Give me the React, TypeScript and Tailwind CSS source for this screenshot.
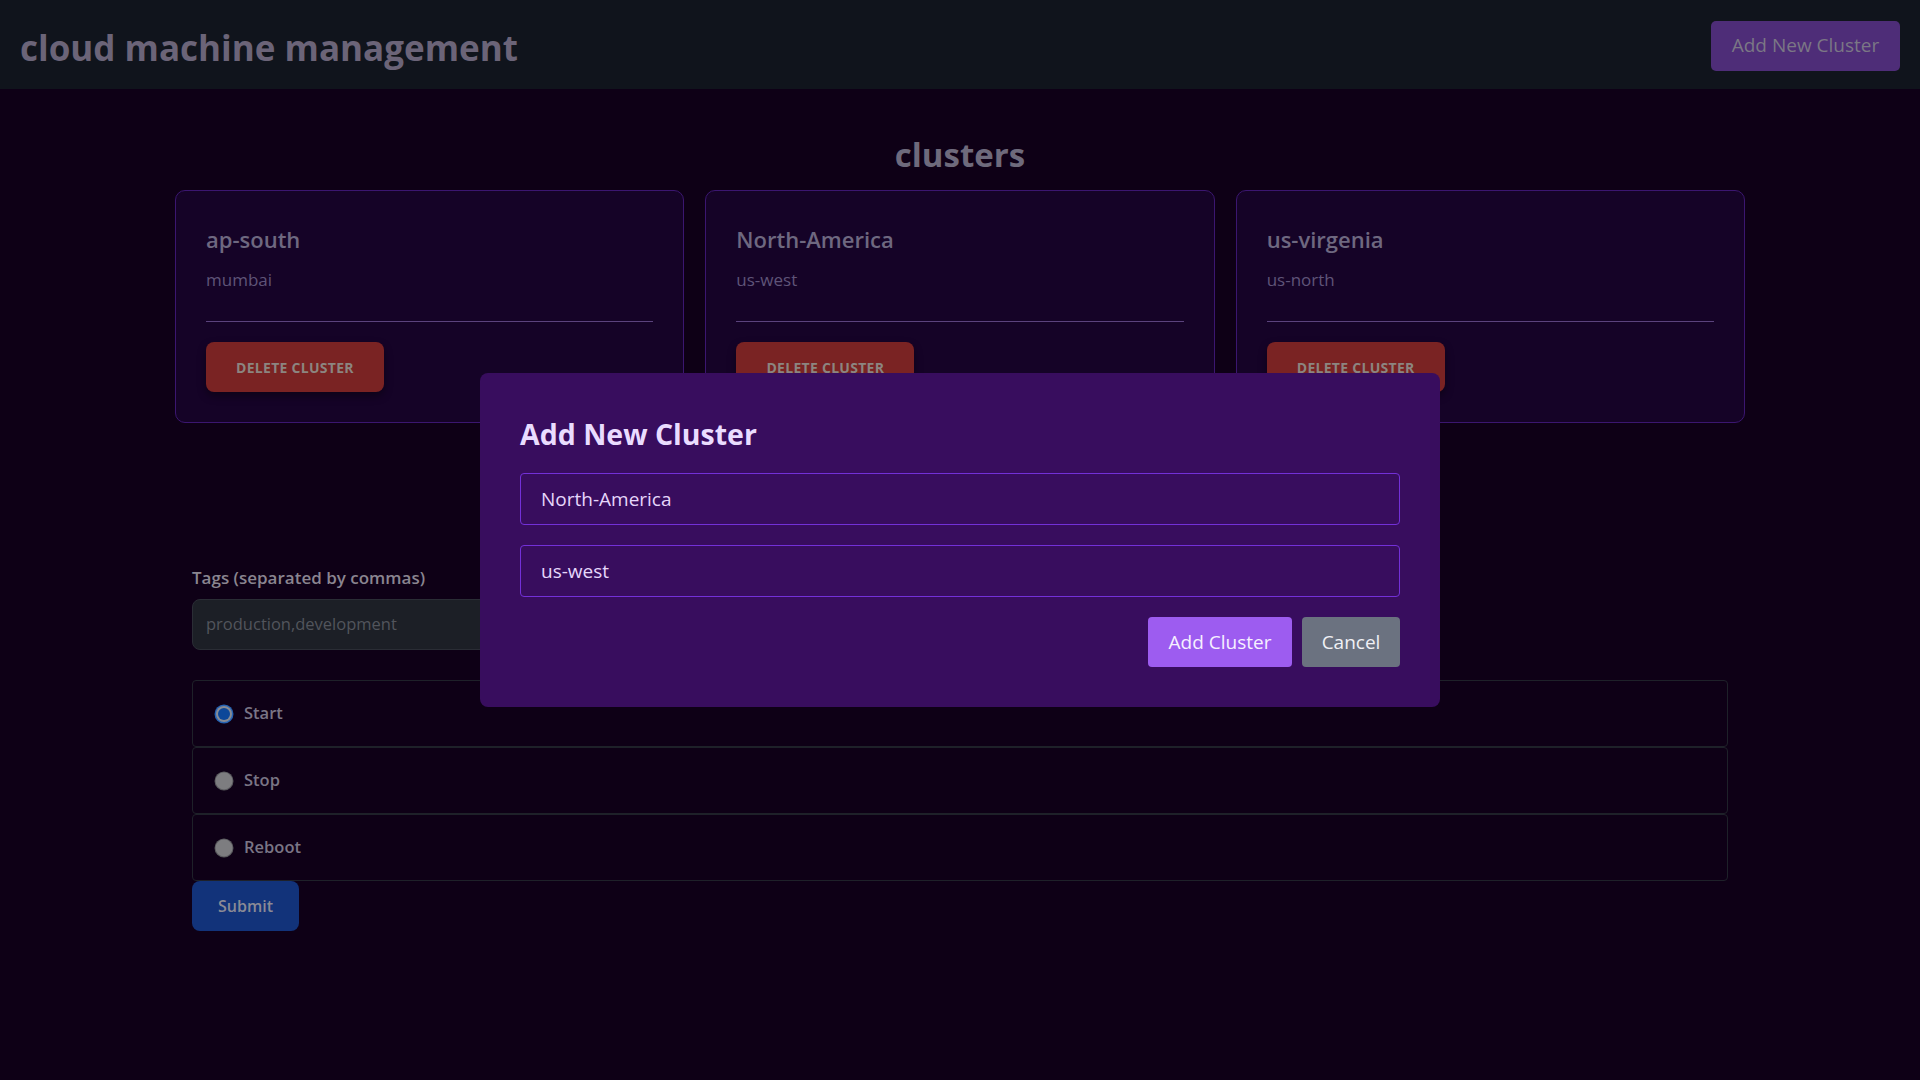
import React from "react";

const font = { fontFamily: '"Open Sans", "Noto Sans", sans-serif' };

function Radio({ checked }: { checked: boolean }) {
  if (checked) {
    return (
      <svg width="20" height="20" viewBox="0 0 20 20" className="shrink-0">
        <circle cx="10" cy="10" r="9.5" fill="#2563b4" />
        <circle cx="10" cy="10" r="8" fill="#878b94" />
        <circle cx="10" cy="10" r="6" fill="#0c4799" />
      </svg>
    );
  }
  return (
    <svg width="20" height="20" viewBox="0 0 20 20" className="shrink-0">
      <circle cx="10" cy="10" r="9.5" fill="#5a5a5e" />
      <circle cx="10" cy="10" r="8.5" fill="#7d7d80" />
    </svg>
  );
}

const clusters = [
  { name: "ap-south", region: "mumbai" },
  { name: "North-America", region: "us-west" },
  { name: "us-virgenia", region: "us-north" },
];

export default function App() {
  return (
    <div className="min-h-screen bg-[#0e0016]" style={font}>
      <header className="h-[89px] bg-[#10141c] flex items-center justify-between px-5">
        <h1 className="mt-[5px] text-[35px] font-bold text-[#6b6478] leading-none">cloud machine management</h1>
        <button className="mt-[2px] h-[50px] w-[189px] rounded-[5px] bg-[#4e2d78] text-[19px] text-[#7b7785]">
          Add New Cluster
        </button>
      </header>

      <main>
        <h2 className="mt-[42px] text-center text-[33px] font-bold leading-[48px] text-[#6e6a7c]">clusters</h2>
        <div className="mx-auto mt-[11px] grid w-[1570px] grid-cols-3 gap-[21px]">
          {clusters.map((c) => (
            <div key={c.name} className="rounded-[10px] border border-[#3b1670] bg-[#150327] p-[30px]">
              <div className="mt-[4px] text-[22px] font-semibold leading-[29px] text-[#6e6880]">{c.name}</div>
              <div className="mt-[14px] text-[17px] leading-[24px] text-[#5f5478]">{c.region}</div>
              <div className="mt-[29px] h-px bg-[#5b437d]" />
              <button className="mt-[20px] h-[50px] w-[178px] rounded-[8px] bg-[#7a2323] text-[14px] font-bold tracking-[0.02em] text-[#8c8580] shadow-[0_4px_8px_rgba(0,0,0,0.4)]">
                DELETE CLUSTER
              </button>
            </div>
          ))}
        </div>

        <div className="mx-auto mt-[143px] w-[1536px]">
          <label className="block text-[17px] font-semibold leading-[24px] text-[#8a8590]">
            Tags (separated by commas)
          </label>
          <div className="mt-[9px] flex h-[51px] w-[900px] items-center rounded-[8px] border border-[#2a2d35] bg-[#1c1f26] px-[13px] text-[16.5px] text-[#52555c]">
            production,development
          </div>

          <div className="mt-[30px] flex flex-col">
            {[
              { label: "Start", checked: true },
              { label: "Stop", checked: false },
              { label: "Reboot", checked: false },
            ].map((r) => (
              <div
                key={r.label}
                className="flex h-[67px] items-center gap-[10px] rounded-[4px] border border-[#1e2129] pl-[21px]"
              >
                <Radio checked={r.checked} />
                <span className="text-[16.5px] font-semibold text-[#7a7585]">{r.label}</span>
              </div>
            ))}
          </div>
          <button className="h-[50px] w-[107px] rounded-[8px] bg-[#12337a] text-[16px] font-semibold text-[#8a8a95]">
            Submit
          </button>
        </div>
      </main>

      <div className="fixed inset-0 flex items-center justify-center">
        <div className="w-[960px] rounded-[8px] bg-[#380d5e] p-10">
          <h2 className="text-[28.5px] font-bold leading-[42px] text-[#eadcff]">Add New Cluster</h2>
          <div className="mt-[18px] flex h-[52px] items-center rounded-[4px] border border-[#7330d8] px-5 text-[19px] text-[#e6d6fb]">
            North-America
          </div>
          <div className="mt-5 flex h-[52px] items-center rounded-[4px] border border-[#7330d8] px-5 text-[19px] text-[#e6d6fb]">
            us-west
          </div>
          <div className="mt-5 flex justify-end gap-[10px]">
            <button className="h-[50px] w-[144px] rounded-[4px] bg-[#9d5cf0] text-[19px] text-[#f6f0ff]">
              Add Cluster
            </button>
            <button className="h-[50px] w-[98px] rounded-[4px] bg-[#6b7280] text-[19px] text-[#f0f0f5]">
              Cancel
            </button>
          </div>
        </div>
      </div>
    </div>
  );
}
